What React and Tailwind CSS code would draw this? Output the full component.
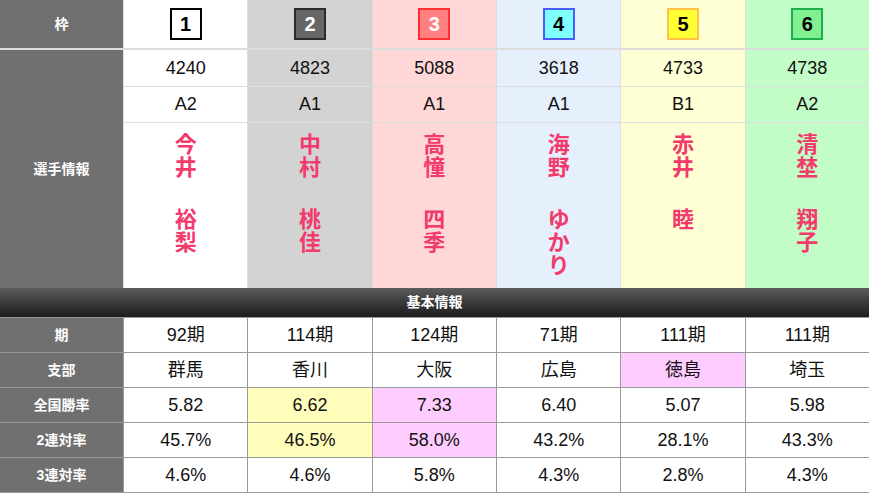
import React from "react";

const JP = { fontFamily: '"Liberation Sans", "Noto Sans CJK JP", sans-serif' };

const COLS = [
  {
    n: 1, bg: "bg-white", badge: "bg-white border-black text-black",
    id: "4240", cls: "A2", name: ["今", "井", "", "裕", "梨"],
    ki: "92期", shibu: "群馬", rate: "5.82", r2: "45.7%", r3: "4.6%",
  },
  {
    n: 2, bg: "bg-[#d3d3d3]", badge: "bg-[#666666] border-[#2a2a2a] text-white",
    id: "4823", cls: "A1", name: ["中", "村", "", "桃", "佳"],
    ki: "114期", shibu: "香川", rate: "6.62", r2: "46.5%", r3: "4.6%",
    rateHi: "bg-[#ffffbb]", r2Hi: "bg-[#ffffbb]",
  },
  {
    n: 3, bg: "bg-[#ffd7d7]", badge: "bg-[#ff8080] border-[#ff3030] text-white",
    id: "5088", cls: "A1", name: ["高", "憧", "", "四", "季"],
    ki: "124期", shibu: "大阪", rate: "7.33", r2: "58.0%", r3: "5.8%",
    rateHi: "bg-[#ffccff]", r2Hi: "bg-[#ffccff]",
  },
  {
    n: 4, bg: "bg-[#e5f0fc]", badge: "bg-[#80ffff] border-[#4a5cff] text-black",
    id: "3618", cls: "A1", name: ["海", "野", "", "ゆ", "か", "り"],
    ki: "71期", shibu: "広島", rate: "6.40", r2: "43.2%", r3: "4.3%",
  },
  {
    n: 5, bg: "bg-[#ffffd6]", badge: "bg-[#ffff33] border-[#ffc34d] text-black",
    id: "4733", cls: "B1", name: ["赤", "井", "", "睦"],
    ki: "111期", shibu: "徳島", rate: "5.07", r2: "28.1%", r3: "2.8%",
    shibuHi: "bg-[#ffccff]",
  },
  {
    n: 6, bg: "bg-[#c2fcc6]", badge: "bg-[#80f090] border-[#1fae4f] text-black",
    id: "4738", cls: "A2", name: ["清", "埜", "", "翔", "子"],
    ki: "111期", shibu: "埼玉", rate: "5.98", r2: "43.3%", r3: "4.3%",
  },
];

function Label({ children, className = "" }) {
  return (
    <div className={`bg-[#707070] flex items-center justify-center text-white text-[14px] font-bold ${className}`}>
      {children}
    </div>
  );
}

export default function App() {
  const rows = [
    { label: "期", key: "ki" },
    { label: "支部", key: "shibu", hi: "shibuHi" },
    { label: "全国勝率", key: "rate", hi: "rateHi" },
    { label: "2連対率", key: "r2", hi: "r2Hi" },
    { label: "3連対率", key: "r3" },
  ];

  return (
    <div className="w-[869px] h-[495px] bg-white overflow-hidden text-[#111]" style={JP}>
      {/* ── 上段: 枠・選手情報 ── */}
      <div className="grid grid-cols-[123px_repeat(6,1fr)] grid-rows-[48px_38px_36px_166px] gap-x-px bg-[#dddddd]">
        <Label className="row-start-1">枠</Label>
        {COLS.map((c) => (
          <div key={c.n} className={`${c.bg} flex items-center justify-center`}>
            <div className={`w-8 h-8 border-2 flex items-center justify-center text-[20px] font-bold ${c.badge}`}>
              {c.n}
            </div>
          </div>
        ))}

        <Label className="row-start-2 row-span-3 mt-[2px]">選手情報</Label>
        {COLS.map((c) => (
          <div key={c.n} className={`${c.bg} mt-[2px] flex items-center justify-center text-[18px]`}>
            {c.id}
          </div>
        ))}
        {COLS.map((c) => (
          <div key={c.n} className={`${c.bg} mt-px flex items-center justify-center text-[18px]`}>
            {c.cls}
          </div>
        ))}
        {COLS.map((c) => (
          <div key={c.n} className={`${c.bg} mt-px flex flex-col items-center pt-[10px] text-[22px] font-bold text-[#f23a6c]`}>
            {c.name.map((ch, i) =>
              ch ? (
                <div key={i} className="h-[23px] leading-[23px]">{ch}</div>
              ) : (
                <div key={i} className="h-[29px]" />
              )
            )}
          </div>
        ))}
      </div>

      {/* ── 基本情報 ── */}
      <div className="h-[29px] bg-gradient-to-b from-[#5c5c5c] to-[#1c1c1c] flex items-center justify-center text-white text-[14px] font-bold">
        基本情報
      </div>

      {/* ── 下段 ── */}
      <div className="grid grid-cols-[123px_repeat(6,1fr)] auto-rows-[34px] gap-px bg-[#9a9a9a] py-px">
        {rows.map((r) => (
          <React.Fragment key={r.key}>
            <Label>{r.label}</Label>
            {COLS.map((c) => (
              <div
                key={c.n}
                className={`${(r.hi && c[r.hi]) || "bg-white"} flex items-center justify-center text-[18px]`}
              >
                {c[r.key]}
              </div>
            ))}
          </React.Fragment>
        ))}
      </div>
    </div>
  );
}
